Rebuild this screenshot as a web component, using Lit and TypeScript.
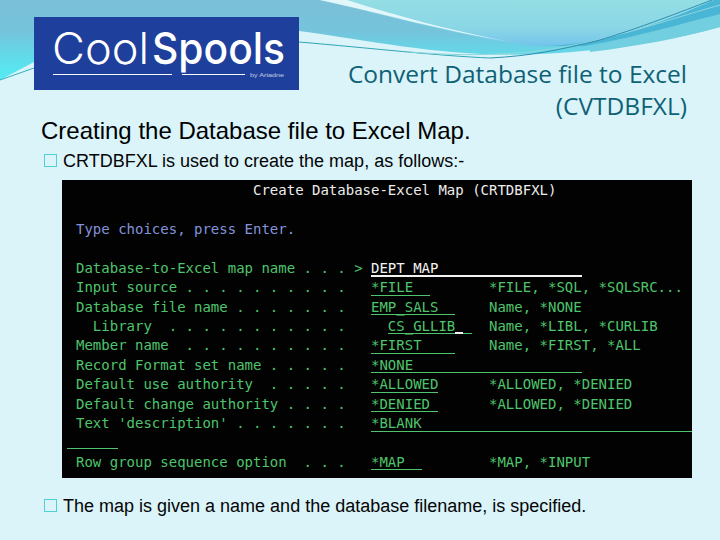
import { LitElement, html, css } from "lit";
import { customElement } from "lit/decorators.js";

type Row = { l: string; f: string; w: number; o?: number; h?: string; c?: string; cursor?: boolean };

const CH = 8.43;

const rows: Row[] = [
  { l: "Database-to-Excel map name . . . >", f: "DEPT_MAP", w: 25, c: "white" },
  { l: "Input source . . . . . . . . . .", f: "*FILE", w: 7, h: "*FILE, *SQL, *SQLSRC..." },
  { l: "Database file name . . . . . . .", f: "EMP_SALS", w: 10, h: "Name, *NONE" },
  { l: "  Library  . . . . . . . . . . .", f: "CS_GLLIB", w: 10, o: 2, h: "Name, *LIBL, *CURLIB", cursor: true },
  { l: "Member name  . . . . . . . . . .", f: "*FIRST", w: 10, h: "Name, *FIRST, *ALL" },
  { l: "Record Format set name . . . . .", f: "*NONE", w: 25 },
  { l: "Default use authority  . . . . .", f: "*ALLOWED", w: 8, h: "*ALLOWED, *DENIED" },
  { l: "Default change authority . . . .", f: "*DENIED", w: 8, h: "*ALLOWED, *DENIED" },
  { l: "Text 'description' . . . . . . .", f: "*BLANK", w: 38.1 },
];

@customElement("app-root")
export class AppRoot extends LitElement {
  static styles = css`
    :host {
      display: block;
      width: 720px;
      height: 540px;
      overflow: hidden;
      background: #daf4fa;
      position: relative;
      font-family: "Liberation Sans", Arial, sans-serif;
      color: #000;
    }
    .wave {
      position: absolute;
      inset: 0 0 auto 0;
      width: 720px;
      height: 100px;
    }
    .page {
      position: relative;
      height: 540px;
      box-sizing: border-box;
      padding: 17px 33px 0 34px;
      display: flex;
      flex-direction: column;
    }
    .head {
      display: flex;
      justify-content: space-between;
      height: 134px;
    }
    .left {
      display: flex;
      flex-direction: column;
      width: 265px;
      flex: none;
    }
    .logo {
      width: 265px;
      height: 73px;
      display: block;
      flex: none;
    }
    .logo text {
      fill: #fff;
    }
    h2 {
      margin: 27px 0 0 7px;
      font-size: 24px;
      line-height: 28px;
      font-weight: 400;
      white-space: nowrap;
    }
    h1 {
      margin: 41px 0 0;
      font-family: "Open Sans", sans-serif;
      font-size: 24.5px;
      line-height: 32px;
      font-weight: 400;
      color: #0f6176;
      text-align: right;
      white-space: nowrap;
    }
    .bullet {
      margin: 0 0 0 10px;
      display: flex;
      align-items: center;
      gap: 6px;
      font-size: 18px;
      line-height: 20px;
      height: 20px;
      color: #050505;
      white-space: nowrap;
    }
    .box {
      width: 11px;
      height: 11px;
      border: 1px solid #4fcfd6;
      flex: none;
      margin-top: -1px;
    }
    .term {
      margin: 9px 0 0 28px;
      width: 630px;
      height: 298px;
      box-sizing: border-box;
      background: #020202;
      padding: 1px 0 0 14px;
      font-family: "DejaVu Sans Mono", monospace;
      font-size: 14px;
      line-height: 19.43px;
      color: #4ec46c;
      overflow: hidden;
    }
    .line {
      height: 19.43px;
      display: flex;
      white-space: pre;
    }
    .title {
      color: #ececec;
      padding-left: 177px;
    }
    .prompt {
      color: #8493dc;
    }
    .gap {
      height: 19.43px;
    }
    .label {
      width: 295px;
      flex: none;
    }
    .fields {
      width: 118px;
      flex: none;
    }
    .f {
      display: block;
      position: relative;
      height: 16.5px;
      border-bottom: 1px solid #4ec46c;
    }
    .f.white {
      color: #f2f2f2;
      border-bottom: 2px solid #f2f2f2;
    }
    .cursor {
      position: absolute;
      left: 67px;
      bottom: -1px;
      width: 8px;
      height: 2px;
      background: #f2f2f2;
    }
    .rule {
      width: 51px;
      border-top: 1px solid #4ec46c;
      margin-left: -9px;
      position: relative;
      top: 15px;
    }
    .bottom {
      margin-top: 18px;
    }
  `;

  private wave() {
    return html`<svg class="wave" viewBox="0 0 720 100" aria-hidden="true">
      <defs>
        <linearGradient id="sky" gradientUnits="userSpaceOnUse" x1="0" y1="0" x2="0" y2="70">
          <stop offset="0" stop-color="#7cbfd8" />
          <stop offset="0.45" stop-color="#74c4dc" />
          <stop offset="1" stop-color="#58e6f0" />
        </linearGradient>
        <linearGradient id="mid" gradientUnits="userSpaceOnUse" x1="0" y1="0" x2="0" y2="48">
          <stop offset="0" stop-color="#93dee4" />
          <stop offset="0.6" stop-color="#8ad6e6" />
          <stop offset="1" stop-color="#70c2ec" />
        </linearGradient>
      </defs>
      <path
        d="M0 0H720V27C680 38 620 50 540 54C450 58 380 42 299 31C200 20 100 30 34 62L0 80Z"
        fill="url(#sky)"
      />
      <path d="M590 47C640 36 680 24 720 14V27C680 38 640 46 590 52Z" fill="#72cfe0" />
      <path d="M320 0H714C660 24 600 46 540 46C480 42 400 18 320 0Z" fill="url(#mid)" />
      <path d="M540 46C600 46 660 24 714 0H720V14C680 24 640 36 585 46Z" fill="#4ab6d6" />
      <path d="M320 0H347C400 17 450 30 510 42C440 30 380 13 320 0Z" fill="#e3f7fb" />
      <path d="M299 42C370 48 440 56 490 58" fill="none" stroke="#2fa5b4" stroke-width="1" />
      <path d="M410 52C450 55 480 56 530 52C600 44 660 22 720 5" fill="none" stroke="#8fd6dc" stroke-width="1" />
      <path d="M490 58C530 56 560 50 600 40C640 28 680 12 712 0" fill="none" stroke="#2e8fb0" stroke-width="1" />
      <path d="M0 80L34 68" fill="none" stroke="#2fb0b8" stroke-width="1" />
    </svg>`;
  }

  private logo() {
    return html`<svg class="logo" viewBox="0 0 265 73" role="img" aria-label="CoolSpools by Ariadne">
      <rect width="265" height="73" fill="#1f3f9c" />
      <text x="18" y="47" font-family="Inter, 'Liberation Sans', sans-serif" font-size="44" font-weight="300" textLength="97" lengthAdjust="spacingAndGlyphs">Cool</text>
      <text x="118" y="47" font-family="Inter, 'Liberation Sans', sans-serif" font-size="44" font-weight="500" textLength="133" lengthAdjust="spacingAndGlyphs">Spools</text>
      <rect x="19" y="57" width="119" height="1" fill="#fff" />
      <rect x="148" y="57" width="63" height="1" fill="#fff" />
      <text x="216" y="60" font-family="'Liberation Sans', sans-serif" font-size="6" textLength="34" lengthAdjust="spacingAndGlyphs" opacity=".7">by Ariadne</text>
    </svg>`;
  }

  render() {
    return html`
      ${this.wave()}
      <div class="page">
        <div class="head">
          <div class="left">
            ${this.logo()}
            <h2>Creating the Database file to Excel Map.</h2>
          </div>
          <h1>Convert Database file to Excel<br />(CVTDBFXL)</h1>
        </div>
        <p class="bullet"><span class="box"></span>CRTDBFXL is used to create the map, as follows:-</p>
        <div class="term">
          <div class="line title">Create Database-Excel Map (CRTDBFXL)</div>
          <div class="gap"></div>
          <div class="line prompt">Type choices, press Enter.</div>
          <div class="gap"></div>
          ${rows.map(
            (r) => html`<div class="line"><span class="label">${r.l}</span><span class="fields"><span
                  class="f ${r.c ?? ""}"
                  style="width:${r.w * CH}px;margin-left:${(r.o ?? 0) * CH}px"
                  >${r.f}${r.cursor ? html`<i class="cursor"></i>` : ""}</span></span><span>${r.h ?? ""}</span></div>`
          )}
          <div class="gap"><div class="rule"></div></div>
          <div class="line"><span class="label">Row group sequence option  . . .</span><span class="fields"><span class="f" style="width:${6 * CH}px">*MAP</span></span><span>*MAP, *INPUT</span></div>
        </div>
        <p class="bullet bottom"><span class="box"></span>The map is given a name and the database filename, is specified.</p>
      </div>
    `;
  }
}
